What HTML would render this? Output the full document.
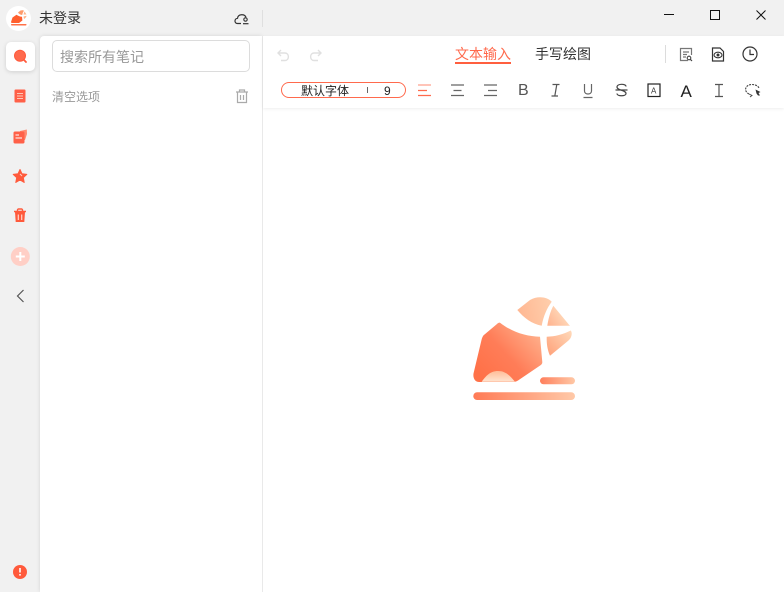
<!DOCTYPE html>
<html><head><meta charset="utf-8">
<style>
html,body{margin:0;padding:0;width:784px;height:592px;overflow:hidden;background:#f1f1f1;font-family:"Liberation Sans","Noto Sans CJK SC",sans-serif;}
.a{position:absolute;white-space:nowrap;line-height:1;}
svg{position:absolute;left:0;top:0;}
</style></head><body>
<div class="a" style="left:40px;top:36px;width:222px;height:556px;background:#fff;border-radius:4px 0 0 0;box-shadow:0 0 4px rgba(0,0,0,.12)"></div>
<div class="a" style="left:262px;top:36px;width:522px;height:556px;background:#fff;border-left:1px solid #e9e9e9;box-sizing:border-box"></div>
<div class="a" style="left:263px;top:36px;width:521px;height:72px;background:#fff;box-shadow:0 1px 3px rgba(0,0,0,.07)"></div>
<div class="a" style="left:6px;top:42px;width:29px;height:29px;background:#fff;border-radius:5px;box-shadow:0 1px 4px rgba(0,0,0,.14)"></div>
<div class="a" style="left:6px;top:6px;width:25px;height:25px;background:#fff;border-radius:50%"></div>
<div class="a" style="left:52px;top:40px;width:198px;height:32px;box-sizing:border-box;border:1px solid #dcdcdc;border-radius:5px;background:#fff"></div>
<div class="a" style="left:39px;top:11px;font-size:14px;color:#333">未登录</div>
<div class="a" style="left:60px;top:50px;font-size:14px;color:#999">搜索所有笔记</div>
<div class="a" style="left:52px;top:91px;font-size:12px;color:#999">清空选项</div>
<div class="a" style="left:455px;top:47px;font-size:14px;color:#ff6a4d;border-bottom:2px solid #ff5f3f;padding-bottom:1px;line-height:14px">文本输入</div>
<div class="a" style="left:535px;top:47px;font-size:14px;color:#333">手写绘图</div>
<div class="a" style="left:281px;top:82px;width:125px;height:16px;box-sizing:border-box;border:1px solid #ff6a4d;border-radius:8px"></div>
<div class="a" style="left:301px;top:84.5px;font-size:12px;color:#222">默认字体</div>
<div class="a" style="left:384px;top:84.5px;font-size:12px;color:#222">9</div>
<div class="a" style="left:367px;top:87px;width:1px;height:6px;background:#666"></div>
<div class="a" style="left:518px;top:83px;font-size:16px;color:#555">B</div>
<div class="a" style="left:680.500px;top:83px;font-size:17px;color:#222">A</div>
<svg width="784" height="592" viewBox="0 0 784 592" fill="none">
<defs>
<linearGradient id="g1" x1="480" y1="375" x2="550" y2="310" gradientUnits="userSpaceOnUse"><stop offset="0" stop-color="#ff7148"/><stop offset=".35" stop-color="#ff7d58"/><stop offset="1" stop-color="#ffd0ac"/></linearGradient>
<linearGradient id="g2" x1="520" y1="320" x2="570" y2="310" gradientUnits="userSpaceOnUse"><stop offset="0" stop-color="#ffb893"/><stop offset="1" stop-color="#ffd9b8"/></linearGradient>
<linearGradient id="g3" x1="473" y1="0" x2="575" y2="0" gradientUnits="userSpaceOnUse"><stop offset="0" stop-color="#ff7a55"/><stop offset="1" stop-color="#ffc9a8"/></linearGradient>
<linearGradient id="g4" x1="540" y1="0" x2="575" y2="0" gradientUnits="userSpaceOnUse"><stop offset="0" stop-color="#ff7f5c"/><stop offset="1" stop-color="#ffc8a6"/></linearGradient>
<linearGradient id="g5" x1="0" y1="371" x2="0" y2="382" gradientUnits="userSpaceOnUse"><stop offset="0" stop-color="#ffbc98"/><stop offset="1" stop-color="#ffe6d2"/></linearGradient>
<linearGradient id="g6" x1="547" y1="350" x2="570" y2="330" gradientUnits="userSpaceOnUse"><stop offset="0" stop-color="#ffa67f"/><stop offset="1" stop-color="#ffd8b8"/></linearGradient>
<linearGradient id="g7" x1="547" y1="325" x2="565" y2="312" gradientUnits="userSpaceOnUse"><stop offset="0" stop-color="#ffb28e"/><stop offset="1" stop-color="#ffdcbd"/></linearGradient>
</defs>
<!-- big logo -->
<path d="M500 322.700C512 332 526 336.500 540 336.700L542.300 362C542.400 363.500 541.500 364.500 540.500 365.300L518 380.500C516 381.700 514.500 382 513 382H479C475 382 472.800 378 473.500 373.500L481.500 340C482 337.500 483 335.500 484.500 334.500L497 324C498 323 499 322.500 500 322.700Z" fill="url(#g1)"/>
<path d="M481.700 381.700C486 376 490 371 498 371C506 371 510 376 515 381.700Z" fill="url(#g5)"/>
<path d="M517.300 310L530 300C538 295.500 547 297 551.700 301.700C547 308 543.500 316 541.700 325.700C532 324 524 318 517.300 310Z" fill="url(#g2)"/>
<path d="M553.300 305.700L568 323.500C569 325 570 325.700 570 325.700H547.300C548.500 318 550.500 311 553.300 305.700Z" fill="url(#g7)"/>
<path d="M546.700 336.700C555 336.500 563 334.500 570.700 330.500C572.500 332.500 572 337.500 568.500 340.500L550 355.700C547.500 350 546.500 344 546.700 336.700Z" fill="url(#g6)"/>
<rect x="540" y="377.300" width="35" height="7" rx="3.500" fill="url(#g4)"/>
<rect x="473.300" y="392.300" width="101.700" height="7.700" rx="3.800" fill="url(#g3)"/>
<!-- app logo -->
<path d="M16.500 14.800C18 16 20 16.700 22 16.800L22.400 20.500 19 23H11.800C11.200 23 11 22.300 11.100 21.800L12.500 17.500Z" fill="#ff5f2e"/>
<path d="M18 12.500L20.500 10.500C22 10 23.500 10.200 24 10.800 23 12 22.500 13.500 22.200 15 20.500 14.800 19 14 18 12.500Z" fill="#ff9a6a"/>
<path d="M24.500 11.500L26.500 14.500H23.500ZM23.500 16.500L26.500 15.800C26.500 17 25.500 18 24 19Z" fill="#ffb388"/>
<rect x="11" y="24" width="15.500" height="1.500" rx=".7" fill="#ff7148"/>
<!-- title bar -->
<path d="M241 23.500H237.500C234 23.500 234.300 18.500 237.500 18.300C238 14 244.500 13.500 246 17.300" stroke="#333" stroke-width="1.200"/><circle cx="245.500" cy="19.500" r="1.700" stroke="#333" stroke-width="1.100"/><path d="M243 23.700H248.500" stroke="#333" stroke-width="1.200"/>
<rect x="262" y="10" width="1" height="17" fill="#dfdfdf"/>
<rect x="664" y="14" width="10" height="1" fill="#111"/>
<rect x="710.500" y="10.500" width="9" height="9" stroke="#111"/>
<path d="M756.500 10.500L765.500 19.500M765.500 10.500L756.500 19.500" stroke="#111"/>
<!-- left rail -->
<circle cx="20" cy="55.700" r="5.500" fill="#ff6a4d" stroke="#ff5a3c"/><path d="M23.800 59.800L26 62" stroke="#ff5a3c" stroke-width="1.800" stroke-linecap="round"/>
<rect x="14.500" y="89.500" width="11" height="13" rx="1" fill="#ff6048"/><path d="M17 93.500H23M17 96H23M17 98.500H23" stroke="#ffc8b8" stroke-width="1"/>
<path d="M20 131L26.800 129.500 27 134 25 140H20Z" fill="#ff8a70"/><rect x="13.500" y="131.500" width="11" height="12" rx="1.500" fill="#ff6048"/><path d="M15.500 135H19M15.500 138H22" stroke="#fff" stroke-width="1"/>
<path d="M20 169.500L22 173.800 26.800 174.400 23.300 177.600 24.200 182.500 20 180 15.800 182.500 16.700 177.600 13.200 174.400 18 173.800Z" fill="#ff5a3c" stroke="#ff5a3c" stroke-linejoin="round"/><path d="M20 174L22 176" stroke="#ffd0c4" stroke-width="1"/>
<path d="M14 211.500H26M17.500 211V210C17.500 209.500 18 209 18.500 209H21.500C22 209 22.500 209.500 22.500 210V211" stroke="#ff5a3c" stroke-width="1.400"/><path d="M15 212H25L24.300 222H15.700Z" fill="#ff5a3c"/><path d="M18.300 214.500V220M21.700 214.500V220" stroke="#ffd5cb" stroke-width="1.200"/>
<circle cx="20.300" cy="256.500" r="9.500" fill="#ffcfc6"/><path d="M20.300 252V261M15.800 256.500H24.800" stroke="#fff" stroke-width="2"/>
<path d="M23.500 290L17.500 296 23.500 302" stroke="#555" stroke-width="1.200"/>
<circle cx="20" cy="572" r="7" fill="#ff5a3c"/><path d="M20 568V572.500" stroke="#fff" stroke-width="1.600"/><rect x="19.200" y="574" width="1.600" height="1.600" fill="#fff"/>
<!-- trash -->
<path d="M236 92H248M239.500 91.500V90H244.500V91.500M237.500 92.500V102.500H246.500V92.500M240.500 95V100M243.500 95V100" stroke="#aaa" stroke-width="1.200"/>
<!-- undo redo -->
<path d="M281 50L278 53 281 56M278.500 53H285C289.500 53 289.500 60.500 285 60.500H281" stroke="#e0e0e0" stroke-width="1.400"/>
<path d="M318 50L321 53 318 56M320.500 53H314C309.500 53 309.500 60.500 314 60.500H318" stroke="#e0e0e0" stroke-width="1.400"/>
<!-- top right -->
<rect x="665" y="45" width="1" height="18" fill="#dcdcdc"/>
<path d="M688 60.500H680.500V48.500H691.500V55M683 52H689M683 54.500H687M683 57H686" stroke="#777" stroke-width="1.200"/><circle cx="689" cy="58" r="1.800" stroke="#444" stroke-width="1.100"/><path d="M690.300 59.300L692 61" stroke="#444" stroke-width="1.200"/>
<path d="M712.500 48H720L723.500 51.500V61H712.500Z" stroke="#333" stroke-width="1.200"/><ellipse cx="718" cy="55" rx="4" ry="2.800" stroke="#333" stroke-width="1.100"/><circle cx="718" cy="55" r="1.500" fill="#333"/>
<circle cx="750" cy="54" r="7" stroke="#333" stroke-width="1.200"/><path d="M750 49.500V54.500H754" stroke="#333" stroke-width="1.200"/>
<!-- align -->
<path d="M418 90.500H427M418 95.500H431" stroke="#ff6a4d" stroke-width="1.300"/><path d="M418 85H431" stroke="#ffa592" stroke-width="1.300"/>
<path d="M451 85H464M453.500 90.500H461.500M451 95.500H464" stroke="#666" stroke-width="1.300"/>
<path d="M484 85H497M488 90.500H497M484 95.500H497" stroke="#666" stroke-width="1.300"/>
<!-- I U S -->
<path d="M552.500 84.500H559.500M556.800 84.500L554.800 96M551.500 96H558" stroke="#555" stroke-width="1.200"/>
<path d="M584.500 84V91C584.500 95 591.500 95 591.500 91V84M583.500 97.500H592.500" stroke="#666" stroke-width="1.200"/>
<path d="M626 86.500C626 83.500 617 83.500 617 87C617 90.500 626 90 626 93.500C626 96.500 617 96.500 617 93.500M615.500 90H627.500" stroke="#444" stroke-width="1.200"/>
<rect x="648" y="84" width="12" height="12.500" stroke="#222" stroke-width="1.200"/>
<text x="651" y="93.500" font-size="8" fill="#333" font-family="Liberation Sans">A</text>
<path d="M715 84.500H723M715 96.500H723M719 84.500V96.500" stroke="#555" stroke-width="1.200"/>
<path d="M749 94C743 91 745.500 84.500 752 84.500C755.500 84.500 758 86 759 88" stroke="#444" stroke-width="1.100" stroke-dasharray="2 1"/>
<path d="M755.500 89.500L760.500 92 758.500 93 760 95.500 758 95.500 756.500 93.500Z" fill="#333"/>
<path d="M749 94L752 95.500 750 97" stroke="#444" stroke-width=".9"/>
</svg>
</body></html>
